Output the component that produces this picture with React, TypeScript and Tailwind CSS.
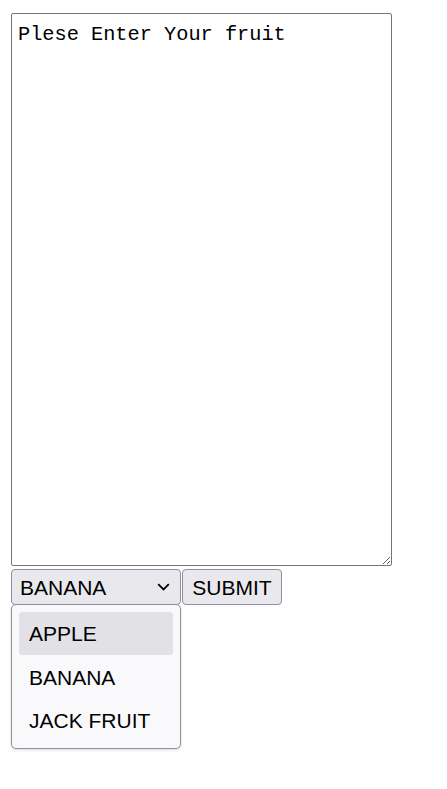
import React from "react";

export default function App() {
  const sans = { fontFamily: '"Liberation Sans", Arial, sans-serif' };
  return (
    <div className="pl-[11px] pt-[13px] bg-white min-h-screen">
      <textarea
        defaultValue="Plese Enter Your fruit"
        className="block w-[381px] h-[553px] border border-[#767676] rounded-[2px] pt-[6px] pl-[6px] text-[20.3px] text-black outline-none resize"
        style={{ fontFamily: '"Liberation Mono", "DejaVu Sans Mono", monospace' }}
      />
      <div className="flex gap-[1px] mt-[3px] items-start">
        <div className="relative">
          <div
            className="w-[170px] h-[36px] border border-[#8f8f9d] rounded-[4px] bg-[#e9e9ed] flex items-center justify-between pl-[8px] pr-[10px] pt-[2px] text-[21px] text-black"
            style={sans}
          >
            <span>BANANA</span>
            <svg width="13" height="8" viewBox="0 0 13 8" fill="none" className="-mt-[2px]">
              <path d="M1.2 1.2 L6.5 6.5 L11.8 1.2" stroke="#000" strokeWidth="1.8" />
            </svg>
          </div>
          <div
            className="absolute left-0 top-[35px] w-[170px] h-[145px] bg-[#f9f9fb] border border-[#8f8f9d] rounded-[5px] p-[7px] shadow-[0_1px_3px_rgba(0,0,0,0.15)] text-[21px] text-black"
            style={sans}
          >
            <div className="h-[43px] rounded-[3px] bg-[#e2e1e6] flex items-center pl-[10px] pt-[1px]">APPLE</div>
            <div className="h-[43px] flex items-center pl-[10px] pt-[2px]">BANANA</div>
            <div className="h-[43px] flex items-center pl-[10px] pt-[2px]">JACK FRUIT</div>
          </div>
        </div>
        <div
          className="w-[100px] h-[36px] border border-[#8f8f9d] rounded-[4px] bg-[#e9e9ed] flex items-center justify-center pt-[2px] text-[21px] text-black"
          style={sans}
        >
          SUBMIT
        </div>
      </div>
    </div>
  );
}
